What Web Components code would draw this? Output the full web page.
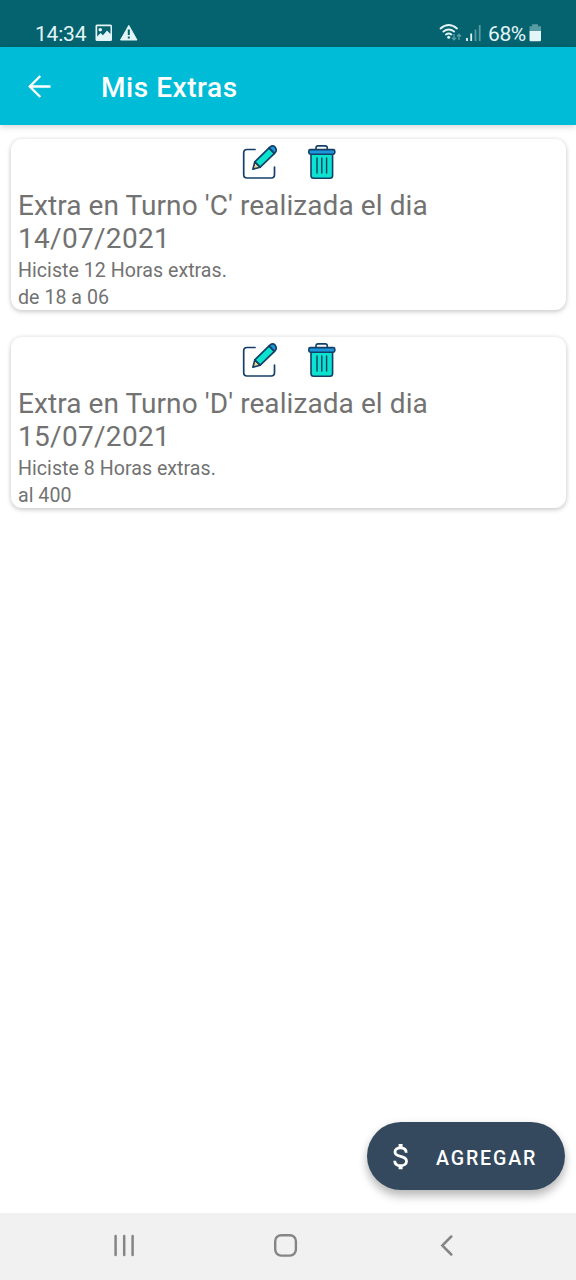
<!DOCTYPE html>
<html lang="es">
<head>
<meta charset="utf-8">
<title>Mis Extras</title>
<style>
html,body{margin:0;height:100%;background:#fff;overflow:hidden}
body{font-family:Roboto,"Noto Sans",sans-serif}
</style>
</head>
<body>
<extras-app></extras-app>
<script>
const define = (name, html) => {
  const t = document.createElement('template');
  t.innerHTML = html;
  customElements.define(name, class extends HTMLElement {
    constructor() {
      super();
      this.attachShadow({mode: 'open'}).append(t.content.cloneNode(true));
    }
  });
};

define('status-bar', `
<style>
:host{display:flex;box-sizing:border-box;height:47px;padding:20px 34px 0 35px;background:#04636f;color:#e4f5f7;justify-content:space-between;font-size:21px;line-height:27px}
.g{display:flex;align-items:flex-start}
svg{display:block;flex:none}
.time{letter-spacing:-.2px;width:60px;padding-top:1px}
.pct{letter-spacing:-.4px;width:40px;padding-top:1px}
</style>
<div class="g"><span class="time">14:34</span>
<svg width="44" height="27" viewBox="95 20 44 27">
<path fill="#e4f5f7" fill-rule="evenodd" d="M97 24.500H110.500Q112 24.500 112 26V39.500Q112 41 110.500 41H97Q95.500 41 95.500 39.500V26Q95.500 24.500 97 24.500ZM97.200 26.200V36.500L100.500 33L103 35.200L107 30.500L110.500 34V26.200Z"/>
<circle cx="100.300" cy="29.700" r="1.800" fill="#e4f5f7"/>
<path fill="#e4f5f7" stroke="#e4f5f7" stroke-linejoin="round" d="M128.800 25.400L137 40H120.500Z"/>
<path stroke="#04636f" stroke-width="2" d="M128.800 29.500V35M128.800 36.500V38.500"/>
</svg></div>
<div class="g"><svg width="49" height="27" viewBox="439 20 49 27" fill="none">
<g stroke="#e4f5f7" stroke-width="1.900" stroke-linecap="round"><path d="M440.500 28.500Q448.700 21.500 457 28.500M443.400 31.600Q448.700 27.200 454.100 31.600M446 34.500Q448.700 32.500 451.400 34.500"/></g>
<circle cx="448.700" cy="37.300" r="1.500" fill="#e4f5f7"/>
<path stroke="#579ba3" stroke-width="1.400" d="M454 34V39.600M452 37.700L454 39.800L456 37.700M459 40V34.500M457 36.500L459 34.300L461 36.500"/>
<path stroke="#e4f5f7" stroke-width="1.800" d="M467 38V41M471.200 33.500V41"/><path stroke="#579ba3" stroke-width="1.800" d="M475.500 29.500V41M479.700 25V41"/>
</svg><span class="pct">68%</span>
<svg width="14" height="27" viewBox="528 20 14 27"><path fill="#579ba3" d="M532 24.300H538V26.300H541V31H529.500V26.300H532Z"/><path fill="#e4f5f7" d="M529.500 31H541V40Q541 41.300 539.700 41.300H530.800Q529.500 41.300 529.500 40Z"/></svg></div>`);

define('app-bar', `
<style>
:host{display:flex;box-sizing:border-box;height:78px;align-items:center;background:#00bcd6;color:#fff;padding:2px 0 0 24px;position:relative;box-shadow:0 2px 6px rgba(0,0,0,.16)}
svg{display:block;margin-right:46px}
h1{margin:0;padding-top:2px;font-size:28px;line-height:34px;font-weight:500;letter-spacing:.55px}
</style>
<svg width="31" height="30" viewBox="24 72 31 30" fill="none" stroke="#fff" stroke-width="2.400"><path d="M50.500 86.500H29.800M40.300 76L29.800 86.500L40.300 97"/></svg>
<h1><slot></slot></h1>`);

define('edit-icon', `
<style>:host{display:block}svg{display:block}</style>
<svg width="36" height="36" viewBox="242 144 36 36" stroke="#153f66" stroke-width="1.700" stroke-linecap="round" stroke-linejoin="round">
<path fill="none" d="M255 149.500H247Q243.700 149.500 243.700 153V174.500Q243.700 178 247 178H271.200Q274.500 178 274.500 174.500V167"/>
<path fill="#f3dc8c" d="M252.900 169.200L254.800 162L260.200 167.200Z"/>
<path fill="#0be3cf" d="M254.800 161.800L269.100 147.800L274.500 153.300L260.200 167.200Z"/>
<path fill="#1b98dc" d="M269.100 147.800L270.200 146.800Q272.800 144.800 275 147Q277.200 149.600 275.400 152.300L274.500 153.300Z"/>
</svg>`);

define('trash-icon', `
<style>:host{display:block}svg{display:block}</style>
<svg width="30" height="36" viewBox="307 144 30 36" stroke="#153f66" stroke-width="1.600" stroke-linecap="round" stroke-linejoin="round">
<path fill="none" d="M316 149.500V148Q316 145.900 318 145.900H325.200Q327.300 145.900 327.300 148V149.500"/>
<path fill="#0be3cf" d="M311 153.500H332.600V175.500Q332.600 178.200 330 178.200H313.600Q311 178.200 311 175.500Z"/>
<rect x="308.800" y="149.600" width="26" height="4.600" rx="1.600" fill="#1b98dc"/>
<path stroke-width="1.400" d="M317 158V173M321.800 158V173M326.600 158V173"/>
</svg>`);

define('extra-card', `
<style>
:host{display:block;box-sizing:border-box;height:171px;border-radius:11px;background:#fff;color:#727272;padding:5px 7px 0;box-shadow:0 2px 5px rgba(0,0,0,.17),0 0 5px rgba(0,0,0,.09)}
.actions{display:flex;gap:29px;padding-left:224px;height:45px}
h2{margin:0;font-weight:400;font-size:28px;line-height:33px;letter-spacing:.08px}
.date{display:block;letter-spacing:.3px}
.rows{display:flex;flex-direction:column;font-size:19.600px;line-height:27px;padding-top:2px;letter-spacing:.03px}
</style>
<div class="actions"><edit-icon></edit-icon><trash-icon></trash-icon></div>
<h2><slot name="title"></slot> <span class="date"><slot name="date"></slot></span></h2>
<div class="rows"><slot></slot></div>`);

define('add-button', `
<style>
:host{display:flex;box-sizing:border-box;width:198px;height:68px;border-radius:34px;background:#34495e;color:#fff;align-items:center;padding:1px 0 0 23px;box-shadow:0 7px 10px rgba(0,0,0,.2),0 2px 8px rgba(0,0,0,.12)}
svg{display:block;margin-right:25px}
span{font-size:19.600px;font-weight:500;letter-spacing:1.850px;line-height:24px;padding-top:4px}
</style>
<svg width="21" height="34" viewBox="390 1140 21 34" fill="none" stroke="#fff" stroke-width="2.800"><path d="M406.200 1152.700C406.200 1149.500 404 1147.800 400.600 1147.800C397.400 1147.800 395 1149.400 395 1152C395 1158.300 406.500 1154.500 406.500 1161.200C406.500 1164 404.100 1165.700 400.800 1165.700C397.100 1165.700 394.800 1163.800 394.700 1160.700" /><path stroke-width="4" d="M400.600 1144V1148M400.600 1165.300V1169.300"/></svg>
<span><slot></slot></span>`);

define('nav-bar', `
<style>
:host{display:flex;box-sizing:border-box;height:67px;background:#f1f1f1;padding:18px 0 0 111px}
svg{display:block}
.home{margin:0 139px 0 133px}
</style>
<svg width="27" height="28" viewBox="111 1231 27 28" stroke="#858585" stroke-width="2.500" stroke-linecap="round"><path d="M115.600 1236V1255M124.200 1236V1255M132.600 1236V1255"/></svg>
<svg class="home" width="28" height="28" viewBox="271 1231 28 28" fill="none" stroke="#858585" stroke-width="2.400"><rect x="275.200" y="1235.200" width="20.700" height="20.400" rx="6"/></svg>
<svg width="18" height="28" viewBox="438 1231 18 28" fill="none" stroke="#858585" stroke-width="2.500" stroke-linecap="round"><path d="M451.300 1236.500L442.300 1245.500L451.300 1254.500"/></svg>`);

define('extras-app', `
<style>
:host{display:flex;flex-direction:column;width:576px;height:1280px;background:#fff}
main{flex:1;display:flex;flex-direction:column;gap:27px;padding:14px 10px 23px 11px;box-sizing:border-box}
add-button{margin-top:auto;align-self:flex-end;margin-right:1px}
</style>
<status-bar></status-bar>
<app-bar>Mis Extras</app-bar>
<main>
<extra-card><span slot="title">Extra en Turno 'C' realizada el dia</span><span slot="date">14/07/2021</span><span>Hiciste 12 Horas extras.</span><span>de 18 a 06</span></extra-card>
<extra-card><span slot="title">Extra en Turno 'D' realizada el dia</span><span slot="date">15/07/2021</span><span>Hiciste 8 Horas extras.</span><span>al 400</span></extra-card>
<add-button>AGREGAR</add-button>
</main>
<nav-bar></nav-bar>`);
</script>
</body>
</html>
